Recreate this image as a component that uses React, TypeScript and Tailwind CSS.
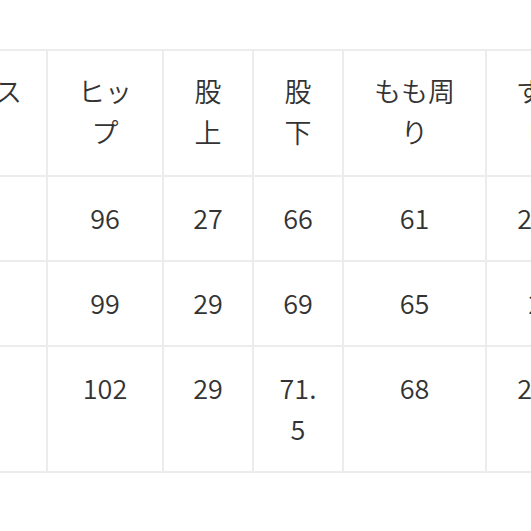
const headers = ["ウエスト", "ヒップ", "股上", "股下", "もも周り", "すそ幅"];
const widths = ["w-[131px]", "w-[116px]", "w-[90px]", "w-[90px]", "w-[143px]", "w-[114px]"];

const rows = [
  ["70", "96", "27", "66", "61", "22.5"],
  ["73", "99", "29", "69", "65", "24"],
  ["76", "102", "29", "71.5", "68", "23.5"],
];

export default function App() {
  return (
    <div
      className="h-[531px] w-[531px] overflow-hidden bg-white pt-[49px] text-[#333333]"
      style={{ fontFamily: '"Noto Sans CJK JP", "Noto Sans", sans-serif' }}
    >
      <table className="-ml-[85px] w-[684px] table-fixed border-collapse text-[27px] leading-[41px] font-[350]">
        <colgroup>
          {widths.map((w, i) => (
            <col key={i} className={w} />
          ))}
        </colgroup>
        <thead>
          <tr>
            {headers.map((h) => (
              <th
                key={h}
                className="border-2 border-[#ececec] px-5 pt-[19px] pb-[23px] text-center align-top font-[350] break-all"
              >
                {h}
              </th>
            ))}
          </tr>
        </thead>
        <tbody>
          {rows.map((row, r) => (
            <tr key={r}>
              {row.map((v, c) => (
                <td
                  key={c}
                  className="border-2 border-[#ececec] px-5 pt-[20px] pb-[22px] text-center align-top break-all"
                >
                  {v}
                </td>
              ))}
            </tr>
          ))}
        </tbody>
      </table>
    </div>
  );
}
